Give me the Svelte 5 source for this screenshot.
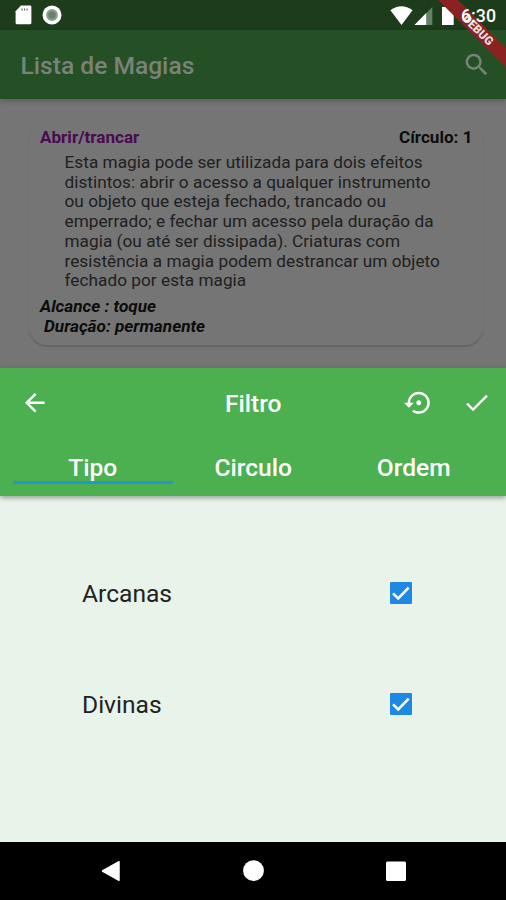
<script>
  const description = [
    'Esta magia pode ser utilizada para dois efeitos',
    'distintos: abrir o acesso a qualquer instrumento',
    'ou objeto que esteja fechado, trancado ou',
    'emperrado; e fechar um acesso pela duração da',
    'magia (ou até ser dissipada). Criaturas com',
    'resistência a magia podem destrancar um objeto',
    'fechado por esta magia'
  ];
  const tabs = ['Tipo', 'Circulo', 'Ordem'];
  const options = ['Arcanas', 'Divinas'];
  let active = $state(0);
  let checked = $state([true, true]);
</script>

<div class="screen">
  <div class="status">
    <svg class="sd" width="17" height="20" viewBox="0 0 17 20"><path d="M6 .6h9q1.4 0 1.4 1.4v15.7q0 1.5-1.5 1.5H2q-1.4 0-1.4-1.5V6.2z" fill="#fff" /><path d="M7 3.5v2M9.5 3.5v2M12 3.5v2" stroke="#526452" stroke-width="1.1" /></svg>
    <svg class="record" width="20" height="20" viewBox="0 0 20 20"><circle cx="10" cy="10" r="9.5" fill="#fff" /><circle cx="10" cy="10" r="5.9" fill="#8ba18b" /><circle cx="10" cy="10" r="3.7" fill="#64836a" /></svg>
    <svg class="signals" width="66" height="22" viewBox="0 0 66 22">
      <path d="M.4 5.2Q11.5-2.8 22.6 5.2L11.5 20z" fill="#fff" />
      <path d="M42.3 2v18H24.5z" fill="#658067" />
      <path d="M36.2 8v12H24.5z" fill="#fff" />
      <path d="M54.5 2h2V.8h5V2h2.2v18H52V2z" fill="#fff" />
    </svg>
    <span class="time">6:30</span>
  </div>
  <div class="ribbon"><span>DEBUG</span></div>

  <header class="appbar">
    <h1>Lista de Magias</h1>
    <svg class="icon" viewBox="0 0 24 24"><path d="M15.5 14h-.79l-.28-.27C15.41 12.59 16 11.11 16 9.5 16 5.91 13.09 3 9.5 3S3 5.91 3 9.5 5.91 16 9.5 16c1.61 0 3.09-.59 4.23-1.57l.27.28v.79l5 4.99L20.49 19l-4.99-5zm-6 0C7.01 14 5 11.99 5 9.5S7.01 5 9.5 5 14 7.01 14 9.5 11.99 14 9.5 14z" /></svg>
  </header>

  <main class="page">
    <article class="card">
      <div class="heading"><span class="name">Abrir/trancar</span><span>Círculo: 1</span></div>
      <div class="description">
        {#each description as line}
          <div>{line}</div>
        {/each}
      </div>
      <div class="detail">Alcance : toque</div>
      <div class="detail duration">Duração: permanente</div>
    </article>
  </main>

  <section class="sheet">
    <div class="toolbar">
      <svg class="icon" viewBox="0 0 24 24"><path d="M20 11H7.83l5.59-5.59L12 4l-8 8 8 8 1.41-1.41L7.83 13H20v-2z" /></svg>
      <h2>Filtro</h2>
      <div class="actions">
        <svg class="icon" viewBox="0 0 24 24"><path d="M14 12c0-1.1-.9-2-2-2s-2 .9-2 2 .9 2 2 2 2-.9 2-2zm-2-9c-4.97 0-9 4.03-9 9H0l4 4 4-4H5c0-3.87 3.13-7 7-7s7 3.13 7 7-3.13 7-7 7c-1.51 0-2.91-.49-4.06-1.3l-1.42 1.44C8.04 20.3 9.94 21 12 21c4.97 0 9-4.03 9-9s-4.03-9-9-9z" /></svg>
        <svg class="icon" viewBox="0 0 24 24"><path d="M9 16.17L4.83 12l-1.42 1.41L9 19 21 7l-1.41-1.41z" /></svg>
      </div>
    </div>
    <nav class="tabs">
      {#each tabs as tab, i}
        <button class:active={active === i} onclick={() => (active = i)}>{tab}</button>
      {/each}
    </nav>
  </section>

  <section class="options">
    {#each options as option, i}
      <label>
        <span>{option}</span>
        <input type="checkbox" bind:checked={checked[i]} />
        <svg class="box" viewBox="0 0 22 22"><rect width="22" height="22" rx="1" fill="#1e88e5" />{#if checked[i]}<path d="M3 11.4L8.2 16.4L18.7 5.7" fill="none" stroke="#fff" stroke-width="2.6" />{/if}</svg>
      </label>
    {/each}
  </section>

  <footer>
    <svg width="20" height="22" viewBox="0 0 20 22"><path d="M1.5 11L18 1.7v18.6z" fill="#fff" stroke="#fff" stroke-width="1.5" stroke-linejoin="round" /></svg>
    <svg width="22" height="22" viewBox="0 0 22 22"><circle cx="10.5" cy="10.7" r="10.4" fill="#fff" /></svg>
    <svg width="20" height="22" viewBox="0 0 20 22"><rect y="1.5" width="20" height="19.5" rx="1.5" fill="#fff" /></svg>
  </footer>
</div>

<style>
  .screen {
    position: relative;
    width: 506px;
    height: 900px;
    overflow: hidden;
    display: flex;
    flex-direction: column;
    background: #757575;
    font-family: Roboto, "Liberation Sans", sans-serif;
  }
  svg { display: block; flex: none; }
  h1, h2 { margin: 0; font-weight: 500; font-size: 24.6px; }
  .icon { width: 29.5px; height: 29.5px; fill: currentColor; }
  .status {
    height: 30px;
    flex: none;
    box-sizing: border-box;
    display: flex;
    align-items: flex-start;
    padding: 5px 9px 0 14.5px;
    background: #1c3c1c;
  }
  .record { margin-left: 10.5px; }
  .signals { margin-left: auto; }
  .time {
    position: relative;
    z-index: 3;
    margin-left: 5px;
    width: 36px;
    font-size: 17.8px;
    line-height: 22px;
    font-weight: 500;
    color: #fff;
    white-space: nowrap;
  }
  .ribbon {
    position: absolute;
    z-index: 2;
    left: 408px;
    top: 22.7px;
    width: 140px;
    height: 14.2px;
    transform: rotate(45deg);
    background: #8a2222;
    color: #e9dfdf;
    text-align: center;
    font-size: 11.8px;
    line-height: 14.5px;
    font-weight: 900;
  }
  .appbar {
    position: relative;
    height: 69px;
    flex: none;
    box-sizing: border-box;
    display: flex;
    align-items: center;
    justify-content: space-between;
    padding: 1px 14.5px 0 20.5px;
    background: #255025;
    color: #7b827b;
    box-shadow: 0 2px 5px rgba(0, 0, 0, 0.22);
  }
  .page { height: 269px; flex: none; box-sizing: border-box; padding: 24px 23px 0 29px; }
  .card {
    height: 222px;
    box-sizing: border-box;
    padding: 4px 10.5px 0 11px;
    border-radius: 18px;
    background: #757575;
    box-shadow: 0 1.5px 1.5px rgba(0, 0, 0, 0.14);
    color: #0c0c0c;
  }
  .heading { display: flex; justify-content: space-between; font-weight: 700; font-size: 17.1px; line-height: 20px; }
  .name { color: #490b50; }
  .description { margin: 6px 0 6px 24.5px; color: #202020; font-size: 17.2px; line-height: 19.7px; letter-spacing: 0.04px; white-space: nowrap; }
  .detail { font-size: 17.2px; line-height: 19.7px; font-weight: 700; font-style: italic; white-space: pre; }
  .duration { margin-left: 4px; }
  .sheet {
    position: relative;
    height: 128px;
    flex: none;
    display: flex;
    flex-direction: column;
    background: #4caf50;
    color: #fff;
    box-shadow: 0 2px 5px rgba(0, 0, 0, 0.35);
  }
  .toolbar { height: 70px; display: grid; grid-template-columns: 1fr auto 1fr; align-items: center; padding: 0 14.5px 0 20px; }
  .toolbar h2 { padding-right: 5px; }
  .actions { justify-self: end; display: flex; gap: 29px; }
  .tabs { display: flex; padding: 0 12px 0 12.5px; height: 46px; }
  .tabs button {
    flex: 1;
    border: 0;
    border-bottom: 3px solid transparent;
    background: none;
    color: inherit;
    font: 500 24.6px/26px Roboto, sans-serif;
    padding: 17px 0 0;
  }
  .tabs .active { border-color: #2196d3; }
  .options {
    flex: 1;
    box-sizing: border-box;
    padding: 41px 94px 0 82px;
    background: #e8f3e9;
  }
  label { height: 111px; display: flex; align-items: center; justify-content: space-between; font-size: 24.6px; color: #222; }
  label span { padding-top: 1px; }
  input { position: absolute; opacity: 0; }
  .box { width: 22px; height: 22px; }
  footer {
    height: 58px;
    flex: none;
    box-sizing: border-box;
    display: flex;
    align-items: center;
    justify-content: space-between;
    padding: 0 100px 0 101px;
    background: #000;
  }
</style>
